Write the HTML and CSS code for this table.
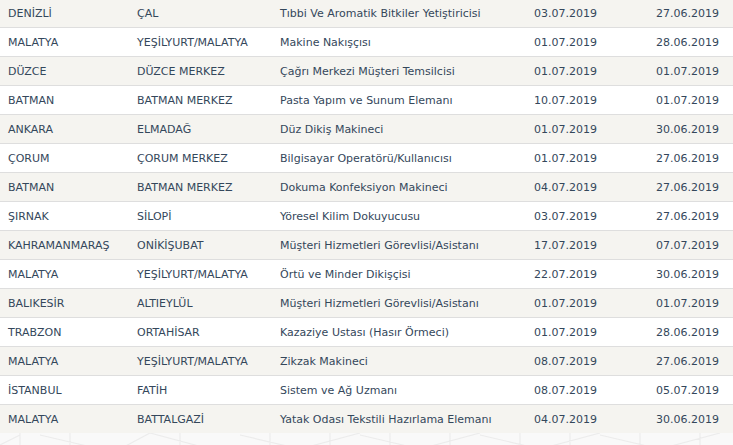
FILE: index.html
```html
<!DOCTYPE html>
<html lang="tr">
<head>
<meta charset="utf-8">
<link rel="stylesheet" href="styles.css">
</head>
<body>
<div class="wrap">
<table class="list">
<colgroup><col class="c1"><col class="c2"><col class="c3"><col class="c4"><col class="c5"></colgroup>
<tbody>
<tr><td>DENİZLİ</td><td>ÇAL</td><td>Tıbbi Ve Aromatik Bitkiler Yetiştiricisi</td><td>03.07.2019</td><td>27.06.2019</td></tr>
<tr><td>MALATYA</td><td>YEŞİLYURT/MALATYA</td><td>Makine Nakışçısı</td><td>01.07.2019</td><td>28.06.2019</td></tr>
<tr><td>DÜZCE</td><td>DÜZCE MERKEZ</td><td>Çağrı Merkezi Müşteri Temsilcisi</td><td>01.07.2019</td><td>01.07.2019</td></tr>
<tr><td>BATMAN</td><td>BATMAN MERKEZ</td><td>Pasta Yapım ve Sunum Elemanı</td><td>10.07.2019</td><td>01.07.2019</td></tr>
<tr><td>ANKARA</td><td>ELMADAĞ</td><td>Düz Dikiş Makineci</td><td>01.07.2019</td><td>30.06.2019</td></tr>
<tr><td>ÇORUM</td><td>ÇORUM MERKEZ</td><td>Bilgisayar Operatörü/Kullanıcısı</td><td>01.07.2019</td><td>27.06.2019</td></tr>
<tr><td>BATMAN</td><td>BATMAN MERKEZ</td><td>Dokuma Konfeksiyon Makineci</td><td>04.07.2019</td><td>27.06.2019</td></tr>
<tr><td>ŞIRNAK</td><td>SİLOPİ</td><td>Yöresel Kilim Dokuyucusu</td><td>03.07.2019</td><td>27.06.2019</td></tr>
<tr><td>KAHRAMANMARAŞ</td><td>ONİKİŞUBAT</td><td>Müşteri Hizmetleri Görevlisi/Asistanı</td><td>17.07.2019</td><td>07.07.2019</td></tr>
<tr><td>MALATYA</td><td>YEŞİLYURT/MALATYA</td><td>Örtü ve Minder Dikişçisi</td><td>22.07.2019</td><td>30.06.2019</td></tr>
<tr><td>BALIKESİR</td><td>ALTIEYLÜL</td><td>Müşteri Hizmetleri Görevlisi/Asistanı</td><td>01.07.2019</td><td>01.07.2019</td></tr>
<tr><td>TRABZON</td><td>ORTAHİSAR</td><td>Kazaziye Ustası (Hasır Örmeci)</td><td>01.07.2019</td><td>28.06.2019</td></tr>
<tr><td>MALATYA</td><td>YEŞİLYURT/MALATYA</td><td>Zikzak Makineci</td><td>08.07.2019</td><td>27.06.2019</td></tr>
<tr><td>İSTANBUL</td><td>FATİH</td><td>Sistem ve Ağ Uzmanı</td><td>08.07.2019</td><td>05.07.2019</td></tr>
<tr class="last"><td>MALATYA</td><td>BATTALGAZİ</td><td>Yatak Odası Tekstili Hazırlama Elemanı</td><td>04.07.2019</td><td>30.06.2019</td></tr>
</tbody>
</table>
<svg class="pattern" width="733" height="16" viewBox="0 0 733 16" stroke="#ececec" stroke-width="1.2" fill="none">
<path d="M0 12 L20 2 M20 0 L20 16 M40 2 L100 16 M70 0 L70 16 M120 16 L150 0 M150 0 L210 16 M180 0 L180 16 M240 2 L300 16 M270 0 L270 16 M300 16 L360 0 M330 0 L330 16 M360 2 L420 16 M390 0 L390 16 M420 16 L480 0 M450 0 L450 16 M480 2 L540 16 M520 0 L520 16 M540 16 L600 0 M570 0 L570 16 M600 2 L660 16 M640 0 L640 16 M660 16 L720 0 M700 0 L700 16"/>
</svg>
</div>
</body>
</html>
```
FILE: styles.css
```css
html, body {
  margin: 0;
  padding: 0;
  background: #f9f9f9;
}
.wrap {
  width: 733px;
  margin-top: -1px;
  overflow: hidden;
}
.list {
  width: 733px;
  border-collapse: collapse;
  table-layout: fixed;
  font-family: "DejaVu Sans", Verdana, sans-serif;
  font-size: 11px;
  color: #34475b;
}
.c1 { width: 129px; }
.c2 { width: 143px; }
.c3 { width: 254px; }
.c4 { width: 122px; }
.c5 { width: 85px; }
.list td {
  height: 28px;
  padding: 0 0 0 8px;
  border-bottom: 1px solid #dedede;
  white-space: nowrap;
  overflow: hidden;
  vertical-align: middle;
}
.list tr:nth-child(odd) td {
  background: #f5f4f0;
}
.list tr:nth-child(even) td {
  background: #ffffff;
}
.list tr.last td {
  border-bottom: none;
}
.pattern {
  display: block;
}
```
